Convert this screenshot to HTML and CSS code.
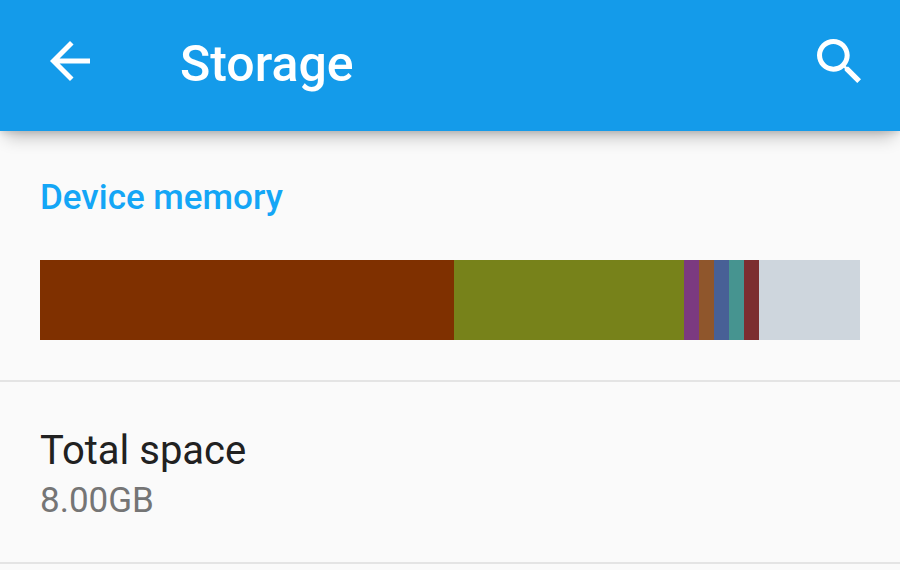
FILE: index.html
```html
<!doctype html>
<html lang="en">
<head>
  <meta charset="utf-8">
  <meta name="viewport" content="width=device-width, initial-scale=1.0">
  <title>Storage</title>
  <link rel="stylesheet" href="styles.css">
</head>
<body>

  <header class="toolbar">
    <button class="icon-button" type="button" aria-label="Back">
      <svg class="icon" viewBox="4 4 16 16"><path d="M20 11H7.83l5.59-5.59L12 4l-8 8 8 8 1.41-1.41L7.83 13H20v-2z"/></svg>
    </button>
    <h1 class="title">Storage</h1>
    <button class="icon-button" type="button" aria-label="Search">
      <svg class="icon icon-search" viewBox="3 3 17.49 17.49"><path d="M15.5 14h-.79l-.28-.27C15.41 12.59 16 11.11 16 9.5 16 5.91 13.09 3 9.5 3S3 5.91 3 9.5 5.91 16 9.5 16c1.61 0 3.09-.59 4.23-1.57l.27.28v.79l5 4.99L20.49 19l-4.99-5zm-6 0C7.01 14 5 11.99 5 9.5S7.01 5 9.5 5 14 7.01 14 9.5 11.99 14 9.5 14z"/></svg>
    </button>
  </header>

  <main>
    <section class="memory">
      <h2 class="section-title">Device memory</h2>
      <div class="usage">
        <span class="part apps" style="flex-grow: 414"></span>
        <span class="part pictures" style="flex-grow: 230"></span>
        <span class="part audio" style="flex-grow: 15"></span>
        <span class="part downloads" style="flex-grow: 15"></span>
        <span class="part cached" style="flex-grow: 15"></span>
        <span class="part misc" style="flex-grow: 15"></span>
        <span class="part other" style="flex-grow: 15"></span>
        <span class="part available" style="flex-grow: 101"></span>
      </div>
    </section>

    <section class="row">
      <div class="row-title">Total space</div>
      <div class="row-summary">8.00GB</div>
    </section>
  </main>

</body>
</html>
```

FILE: styles.css
```css
body {
  margin: 0;
  background: #fafafa;
  color: #212121;
  font-family: Roboto, sans-serif;
}
.toolbar {
  display: flex;
  align-items: center;
  box-sizing: border-box;
  height: 131px;
  padding: 0 39px 10px 50px;
  background: #149bea;
  color: #fff;
  box-shadow: 0 12px 16px -6px rgba(0, 0, 0, 0.24), 0 2px 6px rgba(0, 0, 0, 0.12);
}
.icon-button {
  display: flex;
  padding: 0;
  border: 0;
  background: none;
  color: inherit;
}
.icon {
  width: 40px;
  height: 40px;
  fill: currentColor;
}
.icon-search {
  width: 44px;
  height: 44px;
}
.title {
  flex: 1;
  margin: 6px 0 0 90px;
  font-size: 50px;
  line-height: 60px;
  font-weight: 500;
}
.memory {
  padding: 45px 40px 40px;
}
.section-title {
  margin: 0 0 40px;
  color: #14a6f6;
  font-size: 35px;
  line-height: 44px;
  font-weight: 500;
}
.usage {
  display: flex;
  height: 80px;
}
.part {
  flex-basis: 0;
}
.apps {
  background: #7f3000;
}
.pictures {
  background: #77821a;
}
.audio {
  background: #7b3a80;
}
.downloads {
  background: #8f562c;
}
.cached {
  background: #486096;
}
.misc {
  background: #469490;
}
.other {
  background: #7c2e30;
}
.available {
  background: #ced6dd;
}
.row {
  padding: 42px 40px 38px;
  border-top: 2px solid #e4e4e4;
  border-bottom: 2px solid #e4e4e4;
}
.row-title {
  font-size: 40px;
  line-height: 54px;
}
.row-summary {
  color: #757575;
  font-size: 35px;
  line-height: 46px;
}
```
